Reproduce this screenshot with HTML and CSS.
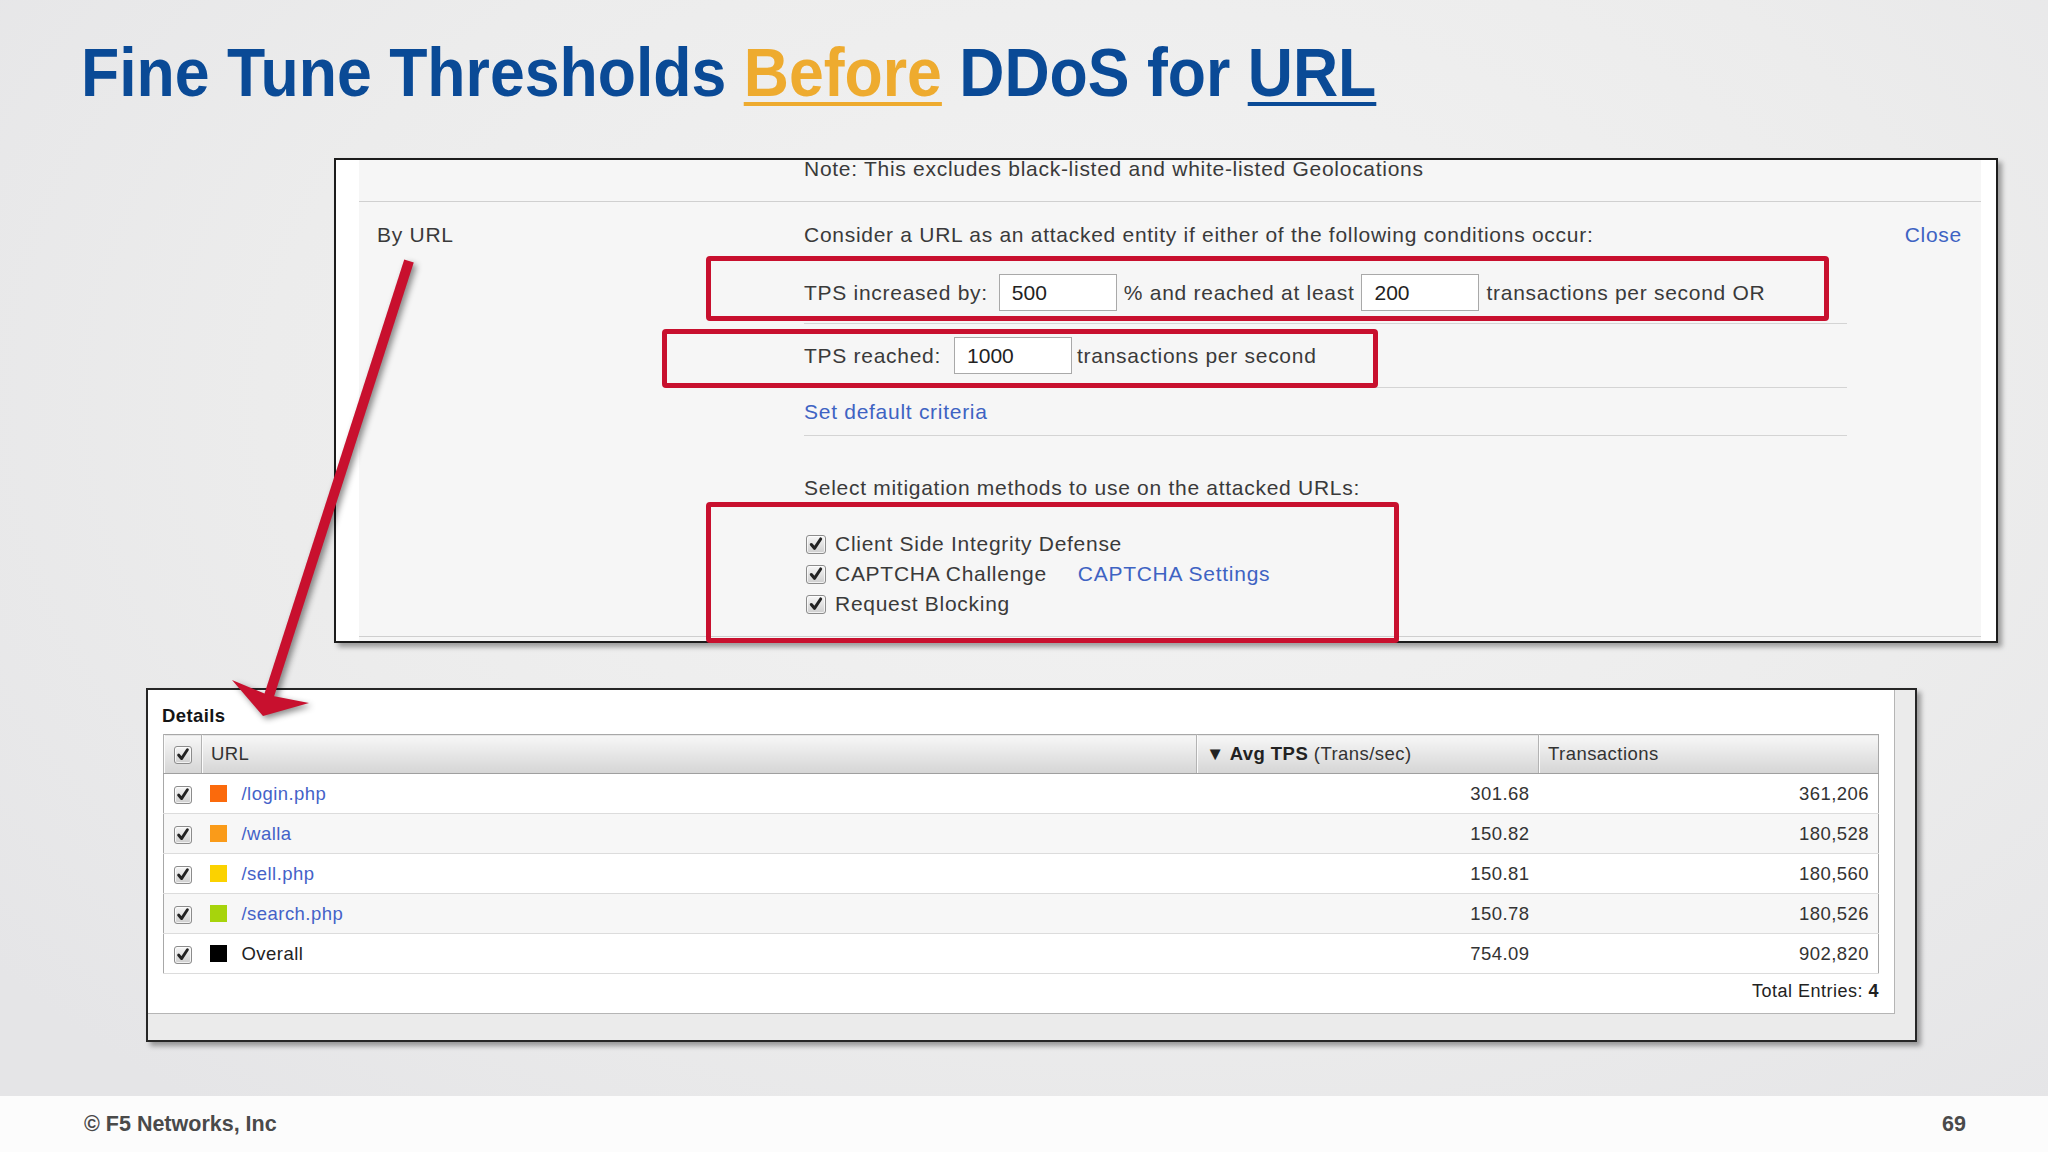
FILE: index.html
```html
<!DOCTYPE html>
<html lang="en">
<head>
<meta charset="utf-8">
<title>Fine Tune Thresholds Before DDoS for URL</title>
<link rel="stylesheet" href="styles.css">
</head>
<body>
<div class="slide">
  <h1 class="title"><span class="title-text">Fine Tune Thresholds <span class="hl">Before</span> DDoS for <span class="ul">URL</span></span></h1>

  <section class="cfg">
    <div class="cfg-inner">
      <div class="note">Note: This excludes black-listed and white-listed Geolocations</div>
      <div class="byurl">
        <div class="byurl-label">By URL</div>
        <div class="byurl-body">
          <div class="row row-consider"><span>Consider a URL as an attacked entity if either of the following conditions occur:</span><a class="link">Close</a></div>
          <div class="row row-rule row-tps1"><span>TPS increased by:</span><input class="inp" type="text" value="500" readonly><span>% and reached at least</span><input class="inp inp-b" type="text" value="200" readonly><span>transactions per second OR</span></div>
          <div class="row row-rule row-tps2"><span>TPS reached:</span><input class="inp" type="text" value="1000" readonly><span>transactions per second</span></div>
          <div class="row row-rule row-default"><a class="link">Set default criteria</a></div>
          <div class="mitig-title">Select mitigation methods to use on the attacked URLs:</div>
          <ul class="mitig">
            <li><span class="cb"><svg viewBox="0 0 20 20"><path d="M4.5 10 L8.2 14.5 L15.5 3.5"/></svg></span>Client Side Integrity Defense</li>
            <li><span class="cb"><svg viewBox="0 0 20 20"><path d="M4.5 10 L8.2 14.5 L15.5 3.5"/></svg></span>CAPTCHA Challenge<a class="link cap-link">CAPTCHA Settings</a></li>
            <li><span class="cb"><svg viewBox="0 0 20 20"><path d="M4.5 10 L8.2 14.5 L15.5 3.5"/></svg></span>Request Blocking</li>
          </ul>
        </div>
      </div>
      <div class="bottom-rule"></div>
    </div>
    <div class="redbox rb1"></div>
    <div class="redbox rb2"></div>
    <div class="redbox rb3"></div>
  </section>

  <section class="details">
    <div class="det-inner">
      <div class="det-title">Details</div>
      <table class="grid">
        <colgroup><col class="c-cb"><col class="c-url"><col class="c-avg"><col class="c-tr"></colgroup>
        <thead>
          <tr>
            <th class="cbcell"><span class="cb cb-sm"><svg viewBox="0 0 20 20"><path d="M4.5 10 L8.2 14.5 L15.5 3.5"/></svg></span></th>
            <th>URL</th>
            <th><b>&#9660; Avg TPS</b> (Trans/sec)</th>
            <th>Transactions</th>
          </tr>
        </thead>
        <tbody>
          <tr>
            <td class="cbcell"><span class="cb cb-sm"><svg viewBox="0 0 20 20"><path d="M4.5 10 L8.2 14.5 L15.5 3.5"/></svg></span></td>
            <td class="urlcell"><span class="swatch sw-login"></span><a class="tlink">/login.php</a></td>
            <td class="num">301.68</td>
            <td class="num">361,206</td>
          </tr>
          <tr>
            <td class="cbcell"><span class="cb cb-sm"><svg viewBox="0 0 20 20"><path d="M4.5 10 L8.2 14.5 L15.5 3.5"/></svg></span></td>
            <td class="urlcell"><span class="swatch sw-walla"></span><a class="tlink">/walla</a></td>
            <td class="num">150.82</td>
            <td class="num">180,528</td>
          </tr>
          <tr>
            <td class="cbcell"><span class="cb cb-sm"><svg viewBox="0 0 20 20"><path d="M4.5 10 L8.2 14.5 L15.5 3.5"/></svg></span></td>
            <td class="urlcell"><span class="swatch sw-sell"></span><a class="tlink">/sell.php</a></td>
            <td class="num">150.81</td>
            <td class="num">180,560</td>
          </tr>
          <tr>
            <td class="cbcell"><span class="cb cb-sm"><svg viewBox="0 0 20 20"><path d="M4.5 10 L8.2 14.5 L15.5 3.5"/></svg></span></td>
            <td class="urlcell"><span class="swatch sw-search"></span><a class="tlink">/search.php</a></td>
            <td class="num">150.78</td>
            <td class="num">180,526</td>
          </tr>
          <tr>
            <td class="cbcell"><span class="cb cb-sm"><svg viewBox="0 0 20 20"><path d="M4.5 10 L8.2 14.5 L15.5 3.5"/></svg></span></td>
            <td class="urlcell"><span class="swatch sw-overall"></span><span class="plain">Overall</span></td>
            <td class="num">754.09</td>
            <td class="num">902,820</td>
          </tr>
        </tbody>
      </table>
      <div class="total">Total Entries: <b>4</b></div>
    </div>
  </section>

  <svg class="arrow" viewBox="0 0 2048 1152" aria-hidden="true">
    <line x1="409" y1="261" x2="268" y2="699"/>
    <polygon points="263,716 232,680 268,695 309,703"/>
  </svg>

  <footer class="footer"><span>&copy; F5 Networks, Inc</span><span>69</span></footer>
</div>
</body>
</html>
```

FILE: styles.css
```css
* { box-sizing: border-box; }
html, body { margin: 0; padding: 0; }
body {
  width: 2048px;
  height: 1152px;
  overflow: hidden;
  font-family: "Liberation Sans", Arial, sans-serif;
}

.slide {
  position: relative;
  width: 2048px;
  height: 1152px;
  display: flex;
  flex-direction: column;
  background: radial-gradient(ellipse 70% 80% at 55% 35%, #f3f3f3 0%, #ececec 60%, #e5e5e7 100%);
}

/* Title */
.title {
  margin: 0;
  padding: 32px 0 0 81px;
  height: 112px;
  font-size: 68px;
  line-height: 80px;
  font-weight: 700;
  color: #0a4a96;
  white-space: nowrap;
}
.title-text {
  display: inline-block;
  transform: scaleX(0.92);
  transform-origin: 0 50%;
}
.hl {
  color: #eeab2f;
  text-decoration: underline;
  text-decoration-thickness: 4px;
  text-underline-offset: 6px;
}
.ul {
  text-decoration: underline;
  text-decoration-thickness: 4px;
  text-underline-offset: 6px;
}

/* Top configuration panel */
.cfg {
  position: relative;
  margin: 46px 0 0 334px;
  width: 1664px;
  height: 485px;
  border: 2px solid #1c1c1c;
  background: #fff;
  padding: 0 15px 0 23px;
  box-shadow: 4px 4px 5px rgba(0, 0, 0, 0.35);
}
.cfg-inner {
  height: 100%;
  display: flex;
  flex-direction: column;
  background: #f6f6f6;
  color: #3a3a3a;
  font-size: 21px;
  letter-spacing: 0.72px;
}
.note {
  height: 42px;
  line-height: 17px;
  padding-left: 445px;
  border-bottom: 1px solid #d0d0d0;
}
.byurl {
  display: grid;
  grid-template-columns: 445px 1fr;
  padding-right: 19px;
}
.byurl-label {
  padding: 5px 0 0 18px;
  line-height: 55px;
}
.row {
  display: flex;
  align-items: center;
  margin-right: 115px;
  white-space: nowrap;
}
.row-consider {
  height: 60px;
  padding-top: 5px;
  margin-right: 0;
  justify-content: space-between;
}
.row-rule { border-bottom: 1px solid #d4d4d4; }
.row-tps1 { height: 62px; }
.row-tps2 { height: 64px; }
.row-default { height: 48px; }

.inp {
  width: 118px;
  height: 37px;
  border: 1px solid #a9a9a9;
  background: #fff;
  font: inherit;
  color: #222;
  padding: 0 0 0 12px;
  margin: 0 7px 0 11px;
  outline: none;
}
.inp-b { margin-left: 7px; margin-right: 7px; }
.row-tps2 .inp { margin-left: 13px; margin-right: 5px; }

.link {
  color: #3e63c3;
  text-decoration: none;
  cursor: pointer;
}

.mitig-title {
  padding-top: 40px;
  line-height: 24px;
}
.mitig {
  list-style: none;
  margin: 29px 0 0;
  padding: 0 0 0 2px;
}
.mitig li {
  height: 30px;
  display: flex;
  align-items: center;
  white-space: nowrap;
}
.cap-link { margin-left: 31px; }

.cb {
  display: inline-block;
  width: 20px;
  height: 19px;
  margin-right: 9px;
  border: 1px solid #8c8c8c;
  border-radius: 3px;
  background: linear-gradient(#f6f6f6, #cfcfcf);
  box-shadow: inset 0 0 0 1px rgba(255, 255, 255, 0.7);
  vertical-align: middle;
}
.cb svg {
  display: block;
  width: 100%;
  height: 100%;
  fill: none;
  stroke: #222;
  stroke-width: 3.6;
  stroke-linecap: round;
  stroke-linejoin: round;
}
.cb-sm {
  width: 18px;
  height: 18px;
  margin-right: 0;
}

.bottom-rule {
  margin-top: auto;
  height: 5px;
  border-top: 1px solid #cfcfcf;
}

.redbox {
  position: absolute;
  border: 5px solid #c8102e;
  border-radius: 4px;
}
.rb1 { left: 370px; top: 96px; width: 1123px; height: 65px; }
.rb2 { left: 326px; top: 169px; width: 716px; height: 59px; }
.rb3 { left: 370px; top: 342px; width: 693px; height: 141px; }

/* Details panel */
.details {
  margin: 45px 0 0 146px;
  width: 1771px;
  height: 354px;
  border: 2px solid #262626;
  background: #ebebeb;
  box-shadow: 4px 4px 5px rgba(0, 0, 0, 0.35);
}
.det-inner {
  width: 1747px;
  height: 324px;
  background: #fff;
  border-right: 1px solid #b5b5b5;
  border-bottom: 1px solid #b5b5b5;
  padding: 0 15px;
}
.det-title {
  height: 44px;
  padding: 16px 0 0 0;
  margin-left: -1px;
  font-size: 18.5px;
  line-height: 20px;
  font-weight: 700;
  letter-spacing: 0.4px;
  color: #151515;
}
.grid {
  width: 100%;
  border-collapse: collapse;
  table-layout: fixed;
  font-size: 18.5px;
  letter-spacing: 0.45px;
  color: #333;
  border: 1px solid #a8a8a8;
}
.c-cb { width: 38px; }
.c-url { width: 995px; }
.c-avg { width: 342px; }
.grid th {
  height: 39px;
  padding: 0 0 0 9px;
  text-align: left;
  font-weight: normal;
  white-space: nowrap;
  background: linear-gradient(#f7f7f7, #d5d5d5);
  border-bottom: 1px solid #9f9f9f;
  border-left: 1px solid #b3b3b3;
  box-shadow: inset 1px 0 0 #fbfbfb;
}
.grid th b { font-weight: 700; color: #222; }
.grid td {
  height: 40px;
  padding: 0 9px;
  border-bottom: 1px solid #dcdcdc;
  white-space: nowrap;
}
.grid tbody tr:nth-child(even) td { background: #f7f7f7; }
.grid .cbcell {
  padding: 0;
  text-align: center;
}
.grid .urlcell { padding-left: 8px; }
.swatch {
  display: inline-block;
  width: 17px;
  height: 17px;
  margin-right: 15px;
  vertical-align: -2px;
}
.sw-login { background: #fb6a0c; }
.sw-walla { background: #fa9b19; }
.sw-sell { background: #fbd200; }
.sw-search { background: #a7d40c; }
.sw-overall { background: #000; }
.tlink { color: #4462c8; text-decoration: none; }
.plain { color: #222; }
.num { text-align: right; }

.total {
  margin-top: 5px;
  line-height: 24px;
  text-align: right;
  font-size: 18px;
  letter-spacing: 0.5px;
  color: #222;
}

/* Overlay arrow */
.arrow {
  position: absolute;
  left: 0;
  top: 0;
  width: 2048px;
  height: 1152px;
  pointer-events: none;
  filter: drop-shadow(3px 3px 3px rgba(0, 0, 0, 0.45));
}
.arrow line {
  stroke: #c8102e;
  stroke-width: 10;
  stroke-linecap: butt;
}
.arrow polygon { fill: #c8102e; }

/* Footer */
.footer {
  margin-top: auto;
  height: 56px;
  background: #fcfcfc;
  display: flex;
  justify-content: space-between;
  align-items: center;
  padding: 0 82px 0 84px;
  font-size: 21.5px;
  font-weight: 700;
  color: #4a4a4a;
}
```
